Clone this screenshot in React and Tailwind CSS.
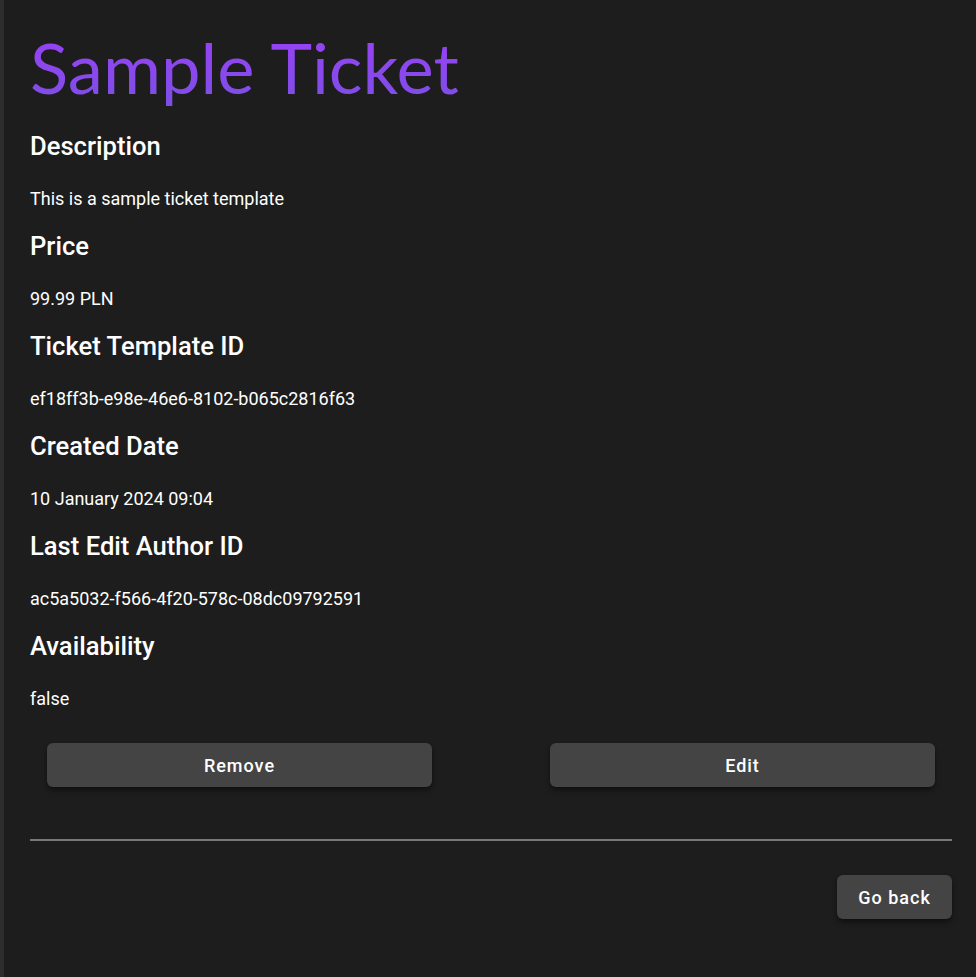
export default function App() {
  const fields = [
    ["Description", "This is a sample ticket template"],
    ["Price", "99.99 PLN"],
    ["Ticket Template ID", "ef18ff3b-e98e-46e6-8102-b065c2816f63"],
    ["Created Date", "10 January 2024 09:04"],
    ["Last Edit Author ID", "ac5a5032-f566-4f20-578c-08dc09792591"],
    ["Availability", "false"],
  ];
  const btn =
    "h-[44px] rounded-md bg-[#444444] shadow-md shadow-black/40 text-[18px] font-medium tracking-[1px] text-white";
  return (
    <div className="min-h-[977px] flex bg-[#1d1d1d] text-white" style={{ fontFamily: "Roboto, 'Noto Sans', sans-serif" }}>
      <div className="w-[4px] shrink-0 bg-[#2d2d2d]" />
      <div className="flex-1 pl-[26px] pr-[24px] pt-[22px]">
        <h1
          className="text-[70.6px] leading-[90px] bg-gradient-to-b from-[#9c3ef7] to-[#7a4fe4] bg-clip-text text-transparent w-fit"
          style={{ fontFamily: "Lato, sans-serif" }}
        >
          Sample Ticket
        </h1>
        <div className="flex flex-col mt-[18px]">
          {fields.map(([h, v]) => (
            <div key={h} className="flex flex-col h-[100px]">
              <h2 className="text-[25.6px] leading-[32px] font-medium">{h}</h2>
              <p className="text-[18px] leading-[27px] mt-[22.5px]">{v}</p>
            </div>
          ))}
        </div>
        <div className="flex justify-between px-[17px] mt-[13px]">
          <button className={`w-[385px] ${btn}`}>Remove</button>
          <button className={`w-[385px] ${btn}`}>Edit</button>
        </div>
        <div className="mt-[52px] h-[2px] bg-[#777777]" />
        <div className="flex justify-end mt-[34px]">
          <button className={`w-[115px] ${btn}`}>Go back</button>
        </div>
      </div>
    </div>
  );
}
